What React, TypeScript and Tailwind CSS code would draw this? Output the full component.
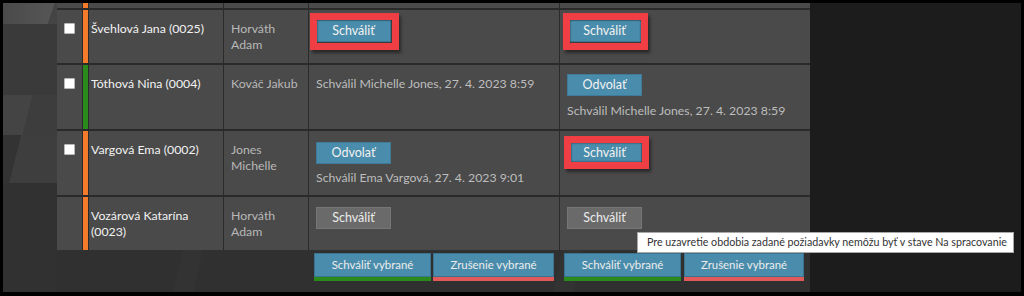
import React from "react";

type Row = {
  name: string;
  approver: string;
  stripe: string;
  checkbox: boolean;
  c3: React.ReactNode;
  c4: React.ReactNode;
};

function BlueBtn({ label, w = "w-[75px]" }: { label: string; w?: string }) {
  return (
    <div
      className={`${w} h-[22px] flex items-center justify-center bg-[#4a8cab] border border-[#3f7b98] text-[12.5px] text-[#f2f2f2] leading-none`}
    >
      {label}
    </div>
  );
}

function GrayBtn({ label }: { label: string }) {
  return (
    <div className="w-[75px] h-[22px] flex items-center justify-center bg-[#6a6a6a] border border-[#767676] text-[12.5px] text-[#ececec] leading-none">
      {label}
    </div>
  );
}

function RedBox({ className }: { className: string }) {
  return (
    <div
      className={`absolute border-[7px] border-[#f03e45] shadow-[inset_0_0_2px_rgba(0,0,0,0.7),2px_3px_3px_rgba(0,0,0,0.45)] pointer-events-none ${className}`}
    />
  );
}

function Status({ text }: { text: string }) {
  return <div className="text-[12.3px] leading-[16px] text-[#bdbdbd] whitespace-nowrap">{text}</div>;
}

function Checkbox() {
  return <div className="w-[11px] h-[11px] bg-white border border-[#b8b8b8] rounded-[1px]" />;
}

const rows: Row[] = [
  {
    name: "Švehlová Jana (0025)",
    approver: "Horváth Adam",
    stripe: "bg-[#f47b2c]",
    checkbox: true,
    c3: (
      <div className="pt-[10px] pl-[7px]">
        <div className="relative w-[75px]">
          <BlueBtn label="Schváliť" />
          <RedBox className="-left-[6px] -top-[7px] w-[89px] h-[37px]" />
        </div>
      </div>
    ),
    c4: (
      <div className="pt-[10px] pl-[7px]">
        <div className="relative w-[75px]">
          <BlueBtn label="Schváliť" />
          <RedBox className="-left-[4px] -top-[7px] w-[85px] h-[37px]" />
        </div>
      </div>
    ),
  },
  {
    name: "Tóthová Nina (0004)",
    approver: "Kováč Jakub",
    stripe: "bg-[#2b8a1c]",
    checkbox: true,
    c3: (
      <div className="pt-[11px] pl-[7px]">
        <Status text="Schválil Michelle Jones, 27. 4. 2023 8:59" />
      </div>
    ),
    c4: (
      <div className="pt-[9px] pl-[7px] flex flex-col gap-[7px]">
        <BlueBtn label="Odvolať" />
        <Status text="Schválil Michelle Jones, 27. 4. 2023 8:59" />
      </div>
    ),
  },
  {
    name: "Vargová Ema (0002)",
    approver: "Jones Michelle",
    stripe: "bg-[#f47b2c]",
    checkbox: true,
    c3: (
      <div className="pt-[11px] pl-[7px] flex flex-col gap-[6px]">
        <BlueBtn label="Odvolať" />
        <Status text="Schválil Ema Vargová, 27. 4. 2023 9:01" />
      </div>
    ),
    c4: (
      <div className="pt-[11px] pl-[7px]">
        <div className="relative w-[75px]">
          <BlueBtn label="Schváliť" />
          <RedBox className="-left-[3px] -top-[6px] w-[85px] h-[33px]" />
        </div>
      </div>
    ),
  },
  {
    name: "Vozárová Katarína (0023)",
    approver: "Horváth Adam",
    stripe: "bg-[#f47b2c]",
    checkbox: false,
    c3: (
      <div className="pt-[10px] pl-[7px]">
        <GrayBtn label="Schváliť" />
      </div>
    ),
    c4: (
      <div className="pt-[10px] pl-[7px]">
        <GrayBtn label="Schváliť" />
      </div>
    ),
  },
];

function Background() {
  return (
    <svg className="absolute inset-0" width="807" height="289" viewBox="0 0 807 289">
      <defs>
        <linearGradient id="topg" x1="0" y1="0" x2="1" y2="0">
          <stop offset="0" stopColor="#4a4a4a" />
          <stop offset="1" stopColor="#565656" />
        </linearGradient>
      </defs>
      <rect x="0" y="0" width="807" height="289" fill="#303030" />
      <rect x="0" y="0" width="54" height="247" fill="#363636" />
      <polygon points="0,0 52,0 45,21 0,21" fill="url(#topg)" />
      <polygon points="45,21 52,0 54,0 54,21" fill="#444444" />
      <polygon points="0,21 54,21 54,92 0,92" fill="#3a3a3a" />
      <polygon points="0,92 30,92 20,132 0,132" fill="#444444" />
      <polygon points="30,92 54,92 54,132 20,132" fill="#3d3d3d" />
      <polygon points="18,132 54,132 54,180 6,180" fill="#3e3e3e" />
      <polygon points="0,132 18,132 6,180 0,180" fill="#333333" />
      <polygon points="0,180 54,180 54,289 0,289" fill="#313131" />
      <polygon points="180,247 200,247 190,289 170,289" fill="#333333" />
      <polygon points="560,247 580,247 570,289 550,289" fill="#333333" />
    </svg>
  );
}

const cols = "grid-cols-[25px_5px_134px_84px_250px_250px]";

export default function App() {
  return (
    <div className="relative w-[1024px] h-[296px] bg-black pt-[3px] pl-[3px] pr-[3px] pb-[4px] font-['Lato','Noto_Sans',sans-serif] overflow-hidden">
      <div className="flex h-full">
        <div className="relative flex w-[807px] h-full overflow-hidden">
          <Background />
          <div className="relative w-[54px] shrink-0" />
          <div className="relative flex flex-col w-[753px]">
            <div
              className={`grid ${cols} grid-rows-[5px_53px_64px_64px_53px] gap-x-px gap-y-[2px] bg-[#2a2a2a]`}
            >
              <div className="bg-[#4a4a4a]" />
              <div className="bg-[#f47b2c]" />
              <div className="bg-[#4a4a4a]" />
              <div className="bg-[#4a4a4a]" />
              <div className="bg-[#4a4a4a]" />
              <div className="bg-[#4a4a4a]" />
              {rows.map((r, i) => (
                <React.Fragment key={i}>
                  <div className="bg-[#4a4a4a] flex justify-center pt-[13px]">
                    {r.checkbox && <Checkbox />}
                  </div>
                  <div className={r.stripe} />
                  <div className="bg-[#4a4a4a] pt-[11px] pl-[2px] pr-[2px] text-[12.3px] leading-[16px] text-[#f2f2f2]">
                    {r.name}
                  </div>
                  <div className="bg-[#4a4a4a] pt-[11px] pl-[7px] pr-[2px] text-[12.3px] leading-[16px] text-[#b8b8b8]">
                    {r.approver}
                  </div>
                  <div className="bg-[#4a4a4a]">{r.c3}</div>
                  <div className="bg-[#4a4a4a]">{r.c4}</div>
                </React.Fragment>
              ))}
            </div>
            <div className={`grid ${cols} gap-x-px mt-[3px]`}>
              <div className="col-start-5 flex gap-[2px] pl-[5px]">
                <BottomBtn label="Schváliť vybrané" w="w-[117px]" line="bg-[#2b8a1c]" />
                <BottomBtn label="Zrušenie vybrané" w="w-[121px]" line="bg-[#e05a5a]" />
              </div>
              <div className="col-start-6 flex gap-[3px] pl-[4px]">
                <BottomBtn label="Schváliť vybrané" w="w-[117px]" line="bg-[#2b8a1c]" />
                <BottomBtn label="Zrušenie vybrané" w="w-[120px]" line="bg-[#e05a5a]" />
              </div>
            </div>
          </div>
        </div>
        <div className="flex-1 bg-[#1c1c1c]" />
      </div>
      <div className="absolute left-[637px] top-[232px] h-[21px] w-[377px] bg-white border border-[#a8a8a8] flex items-center pl-[9px] text-[10.7px] text-[#333333] whitespace-nowrap">
        Pre uzavretie obdobia zadané požiadavky nemôžu byť v stave Na spracovanie
      </div>
    </div>
  );
}

function BottomBtn({ label, w, line }: { label: string; w: string; line: string }) {
  return (
    <div className={`${w} flex flex-col`}>
      <div className="h-[24px] flex items-center justify-center bg-[#4a8cab] border border-[#3a7290] text-[11.4px] text-[#ececec]">
        {label}
      </div>
      <div className={`h-[4px] ${line}`} />
    </div>
  );
}
